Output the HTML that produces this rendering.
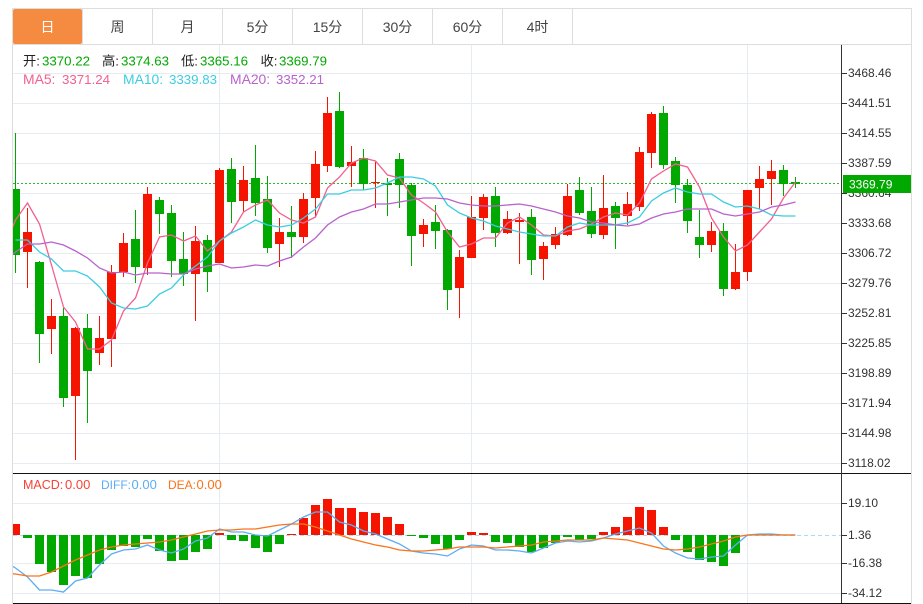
<!DOCTYPE html>
<html><head><meta charset="utf-8"><style>
html,body{margin:0;padding:0;background:#fff;width:923px;height:604px;overflow:hidden}
svg{display:block}
text{font-family:"Liberation Sans","Noto Sans CJK SC",sans-serif}
.a text{font-size:12px;fill:#333}
.t text{font-size:14px;fill:#444;text-anchor:middle}
.h text{font-size:13.3px}
</style></head><body>
<svg width="923" height="604" viewBox="0 0 923 604" xmlns="http://www.w3.org/2000/svg">
<defs><clipPath id="c"><rect x="13" y="45" width="828" height="558"/></clipPath></defs>
<path d="M13 73.5H841M13 103.5H841M13 133.5H841M13 163.5H841M13 193.5H841M13 223.5H841M13 253.5H841M13 283.5H841M13 313.5H841M13 343.5H841M13 373.5H841M13 403.5H841M13 433.5H841M13 463.5H841M13 503.5H841M13 563.5H841M13 593.5H841M219.5 45V603M471.5 45V603M747.5 45V603" stroke="#e6ecf1" fill="none"/>
<path d="M12.5 8V604M911.5 8V604M12 8.5H912M82.5 9V44M152.5 9V44M222.5 9V44M292.5 9V44M362.5 9V44M432.5 9V44M502.5 9V44M572.5 9V44M13 44.5H911" stroke="#ddd" fill="none"/>
<rect x="13" y="9" width="69" height="35" rx="2" fill="#f58b40"/>
<g class="t">
<text x="47.5" y="32" style="fill:#fff">日</text><text x="117.5" y="32">周</text><text x="187.5" y="32">月</text><text x="257.5" y="32">5分</text><text x="327.5" y="32">15分</text><text x="397.5" y="32">30分</text><text x="467.5" y="32">60分</text><text x="537.5" y="32">4时</text>
</g>
<path d="M13 183.5H841" stroke="#2fb52f" stroke-dasharray="2 2" fill="none"/>
<path d="M13 535.5H841" stroke="#a6e0f0" stroke-dasharray="4 3" fill="none"/>
<g clip-path="url(#c)">
<g fill="#f51400" stroke="none">
<path d="M23 232h9V252h-9zM47 316h9V329h-9zM71 328h9V396h-9zM95 338h9V353h-9zM107 272h9V339h-9zM119 243h9V272h-9zM143 194h9V268h-9zM191 241h9V274h-9zM215 170h9V263h-9zM239 180h9V201h-9zM275 232h9V244h-9zM299 199h9V237h-9zM311 164h9V198h-9zM323 113h9V166h-9zM347 162h9V166h-9zM371 182h9V183h-9zM419 225h9V234h-9zM455 257h9V288h-9zM467 217h9V258h-9zM479 197h9V218h-9zM503 219h9V233h-9zM515 220h9V222h-9zM539 246h9V259h-9zM551 234h9V245h-9zM563 196h9V235h-9zM599 208h9V235h-9zM623 204h9V216h-9zM635 152h9V207h-9zM647 114h9V153h-9zM707 231h9V245h-9zM731 272h9V289h-9zM743 190h9V272h-9zM755 179h9V188h-9zM767 171h9V179h-9z"/>
<path d="M11 524h9V535h-9zM299 518h9V535h-9zM311 505h9V535h-9zM323 499h9V535h-9zM335 508h9V535h-9zM347 508h9V535h-9zM359 512h9V535h-9zM371 513h9V535h-9zM383 517h9V535h-9zM395 524h9V535h-9zM467 532h9V535h-9zM479 533h9V535h-9zM599 532h9V535h-9zM611 527h9V535h-9zM623 517h9V535h-9zM635 507h9V535h-9zM647 510h9V535h-9zM659 527h9V535h-9zM215 533h9V535h-9zM287 534h9V535h-9zM755 534h9V535h-9zM767 534h9V535h-9z"/>
</g>
<path fill="none" stroke="#f51400" d="M27.5 208V288M51.5 299V354M75.5 327V460M99.5 316V365M111.5 265V367M123.5 233V277M147.5 187V275M195.5 226V321M219.5 168V263M243.5 166V212M279.5 218V267M303.5 193V243M315.5 151V217M327.5 97V172M351.5 146V187M375.5 162V208M423.5 219V247M459.5 250V318M471.5 196V258M483.5 194V230M507.5 211V234M519.5 213V264M543.5 242V280M555.5 227V249M567.5 184V236M603.5 175V239M627.5 192V225M639.5 147V211M651.5 112V168M711.5 222V252M735.5 244V290M747.5 190V281M759.5 166V209M771.5 160V205"/>
<g fill="#00a800" stroke="none">
<path d="M11 189h9V255h-9zM35 262h9V334h-9zM59 316h9V398h-9zM83 328h9V371h-9zM131 239h9V267h-9zM155 200h9V214h-9zM167 213h9V261h-9zM179 259h9V274h-9zM203 240h9V272h-9zM227 169h9V202h-9zM251 178h9V203h-9zM263 199h9V248h-9zM287 232h9V237h-9zM335 111h9V167h-9zM359 158h9V184h-9zM383 183h9V185h-9zM395 159h9V185h-9zM407 185h9V236h-9zM431 222h9V231h-9zM443 230h9V290h-9zM491 196h9V233h-9zM527 217h9V260h-9zM575 190h9V213h-9zM587 211h9V234h-9zM611 206h9V218h-9zM659 113h9V165h-9zM671 161h9V185h-9zM683 185h9V221h-9zM695 237h9V245h-9zM719 231h9V289h-9zM779 170h9V184h-9zM791 182h9V184h-9z"/>
<path d="M23 535h9V538h-9zM35 535h9V564h-9zM47 535h9V572h-9zM59 535h9V585h-9zM71 535h9V576h-9zM83 535h9V578h-9zM95 535h9V564h-9zM107 535h9V550h-9zM119 535h9V546h-9zM131 535h9V547h-9zM143 535h9V539h-9zM155 535h9V551h-9zM167 535h9V561h-9zM179 535h9V560h-9zM191 535h9V552h-9zM203 535h9V549h-9zM227 535h9V540h-9zM239 535h9V541h-9zM251 535h9V548h-9zM263 535h9V552h-9zM275 535h9V544h-9zM407 535h9V536h-9zM419 535h9V538h-9zM431 535h9V544h-9zM443 535h9V549h-9zM455 535h9V540h-9zM491 535h9V542h-9zM503 535h9V543h-9zM515 535h9V547h-9zM527 535h9V552h-9zM539 535h9V548h-9zM551 535h9V543h-9zM563 535h9V537h-9zM575 535h9V540h-9zM587 535h9V539h-9zM671 535h9V540h-9zM683 535h9V552h-9zM695 535h9V560h-9zM707 535h9V562h-9zM719 535h9V566h-9zM731 535h9V553h-9z"/>
</g>
<path fill="none" stroke="#00a800" d="M15.5 133V273M39.5 261V363M63.5 308V407M87.5 314V423M135.5 210V283M159.5 197V234M171.5 205V277M183.5 232V286M207.5 235V292M231.5 158V223M255.5 145V216M267.5 176V253M291.5 206V258M339.5 92V168M363.5 149V190M387.5 178V216M399.5 153V208M411.5 183V266M435.5 205V249M447.5 229V310M495.5 187V247M531.5 209V275M579.5 177V215M591.5 187V238M615.5 202V249M663.5 106V169M675.5 157V203M687.5 179V233M699.5 210V258M723.5 223V296M783.5 165V196M795.5 177V188"/>
<g fill="none" stroke-width="1.3">
<polyline stroke="#f2608f" points="3.5 250 15.5 220 27.5 203 39.5 224 51.5 265 63.5 307 75.5 322 87.5 349 99.5 349 111.5 340 123.5 311 135.5 298 147.5 263 159.5 237 171.5 235 183.5 241 195.5 236 207.5 251 219.5 241 231.5 232 243.5 212 255.5 205 267.5 200 279.5 213 291.5 220 303.5 223 315.5 217 327.5 188 339.5 177 351.5 163 363.5 158 375.5 161 387.5 175 399.5 178 411.5 195 423.5 203 435.5 212 447.5 232 459.5 247 471.5 244 483.5 238 495.5 238 507.5 223 519.5 217 531.5 225 543.5 235 555.5 236 567.5 231 579.5 229 591.5 224 603.5 217 615.5 213 627.5 215 639.5 203 651.5 179 663.5 171 675.5 164 687.5 167 699.5 187 711.5 218 723.5 237 735.5 251 747.5 245 759.5 232 771.5 219 783.5 198 795.5 182"/>
<polyline stroke="#3ccde0" points="15.5 240 27.5 240 39.5 252 51.5 259 63.5 271 75.5 271 87.5 276 99.5 287 111.5 303 123.5 308 135.5 309 147.5 306 159.5 294 171.5 288 183.5 275 195.5 266 207.5 257 219.5 241 231.5 233 243.5 227 255.5 220 267.5 225 279.5 227 291.5 225 303.5 218 315.5 209 327.5 194 339.5 194 351.5 190 363.5 190 375.5 188 387.5 183 399.5 177 411.5 177 423.5 179 435.5 186 447.5 205 459.5 213 471.5 218 483.5 221 495.5 226 507.5 229 519.5 232 531.5 234 543.5 236 555.5 236 567.5 227 579.5 223 591.5 225 603.5 225 615.5 225 627.5 223 639.5 217 651.5 201 663.5 193 675.5 188 687.5 192 699.5 194 711.5 194 723.5 202 735.5 207 747.5 206 759.5 209 771.5 215 783.5 216 795.5 216"/>
<polyline stroke="#b862cc" points="3.5 262 15.5 252 27.5 244 39.5 244 51.5 242 63.5 245 75.5 251 87.5 258 99.5 268 111.5 273 123.5 272 135.5 275 147.5 273 159.5 273 171.5 274 183.5 274 195.5 269 207.5 266 219.5 264 231.5 268 243.5 267 255.5 265 267.5 266 279.5 261 291.5 257 303.5 247 315.5 238 327.5 225 339.5 217 351.5 212 363.5 209 375.5 204 387.5 204 399.5 202 411.5 200 423.5 198 435.5 198 447.5 199 459.5 203 471.5 205 483.5 206 495.5 206 507.5 205 519.5 204 531.5 206 543.5 209 555.5 212 567.5 216 579.5 218 591.5 222 603.5 223 615.5 225 627.5 226 639.5 224 651.5 218 663.5 214 675.5 212 687.5 209 699.5 209 711.5 209 723.5 214 735.5 216 747.5 214 759.5 212 771.5 207 783.5 205 795.5 202"/>
<polyline stroke="#5dadf2" points="3.5 561 15.5 568 27.5 577 39.5 590 51.5 590 63.5 592 75.5 581 87.5 578 99.5 565 111.5 554 123.5 550 135.5 549 147.5 545 159.5 550 171.5 553 183.5 549 195.5 541 207.5 538 219.5 529 231.5 532 243.5 532 255.5 535 267.5 536 279.5 530 291.5 524 303.5 517 315.5 512 327.5 512 339.5 522 351.5 525 363.5 531 375.5 534 387.5 539 399.5 544 411.5 551 423.5 553 435.5 554 447.5 556 459.5 549 471.5 545 483.5 546 495.5 550 507.5 550 519.5 551 531.5 553 543.5 548 555.5 543 567.5 541 579.5 542 591.5 541 603.5 538 615.5 534 627.5 531 639.5 528 651.5 533 663.5 546 675.5 553 687.5 558 699.5 559 711.5 557 723.5 556 735.5 545 747.5 535 759.5 534 771.5 534 783.5 535 795.5 535"/>
<polyline stroke="#f9741a" points="3.5 573 15.5 574 27.5 576 39.5 576 51.5 572 63.5 566 75.5 560 87.5 555 99.5 550 111.5 547 123.5 545 135.5 544 147.5 543 159.5 542 171.5 540 183.5 537 195.5 534 207.5 531 219.5 530 231.5 530 243.5 529 255.5 529 267.5 527 279.5 525 291.5 524 303.5 524 315.5 527 327.5 531 339.5 535 351.5 539 363.5 542 375.5 545 387.5 547 399.5 550 411.5 551 423.5 551 435.5 550 447.5 549 459.5 547 471.5 547 483.5 547 495.5 548 507.5 547 519.5 546 531.5 545 543.5 542 555.5 541 567.5 540 579.5 540 591.5 540 603.5 538 615.5 539 627.5 540 639.5 543 651.5 546 663.5 549 675.5 550 687.5 549 699.5 547 711.5 544 723.5 541 735.5 537 747.5 535 759.5 535 771.5 535 783.5 535 795.5 535"/>
</g>
</g>
<path d="M13 473.5H911M13 603.5H911" stroke="#111" fill="none"/>
<path d="M841.5 45V603" stroke="#333" fill="none"/>
<path d="M842 73.5h5M842 103.5h5M842 133.5h5M842 163.5h5M842 193.5h5M842 223.5h5M842 253.5h5M842 283.5h5M842 313.5h5M842 343.5h5M842 373.5h5M842 403.5h5M842 433.5h5M842 463.5h5M842 503.5h5M842 535.5h5M842 563.5h5M842 593.5h5" stroke="#333" fill="none"/>
<g class="a">
<text x="848" y="77">3468.46</text><text x="848" y="107">3441.51</text><text x="848" y="137">3414.55</text><text x="848" y="167">3387.59</text><text x="848" y="197">3360.64</text><text x="848" y="227">3333.68</text><text x="848" y="257">3306.72</text><text x="848" y="287">3279.76</text><text x="848" y="317">3252.81</text><text x="848" y="347">3225.85</text><text x="848" y="377">3198.89</text><text x="848" y="407">3171.94</text><text x="848" y="437">3144.98</text><text x="848" y="467">3118.02</text>
<text x="848" y="507">19.10</text><text x="848" y="539">1.36</text><text x="848" y="567">-16.38</text><text x="848" y="597">-34.12</text>
</g>
<rect x="843" y="175" width="68" height="18" fill="#00a800"/>
<text x="849" y="188.5" font-size="12" fill="#fff">3369.79</text>
<g class="h">
<text x="23" y="65.5" fill="#222">开:</text><text x="42" y="65.5" fill="#00a800">3370.22</text>
<text x="102" y="65.5" fill="#222">高:</text><text x="121" y="65.5" fill="#00a800">3374.63</text>
<text x="181" y="65.5" fill="#222">低:</text><text x="200" y="65.5" fill="#00a800">3365.16</text>
<text x="260.5" y="65.5" fill="#222">收:</text><text x="279" y="65.5" fill="#00a800">3369.79</text>
<text x="23" y="84" fill="#f2608f" style="font-size:13.9px">MA5:</text><text x="62" y="84" fill="#f2608f">3371.24</text>
<text x="123" y="84" fill="#3ccde0" style="font-size:13.9px">MA10:</text><text x="169" y="84" fill="#3ccde0">3339.83</text>
<text x="230" y="84" fill="#b862cc" style="font-size:13.9px">MA20:</text><text x="276" y="84" fill="#b862cc">3352.21</text>
<text x="23" y="489" fill="#f44336" style="font-size:12.5px">MACD:</text><text x="65" y="489" fill="#f44336" style="font-size:13px">0.00</text>
<text x="101" y="489" fill="#5dadf2" style="font-size:12px">DIFF:</text><text x="131.5" y="489" fill="#5dadf2" style="font-size:13px">0.00</text>
<text x="168" y="489" fill="#f9741a" style="font-size:12px">DEA:</text><text x="196.5" y="489" fill="#f9741a" style="font-size:13px">0.00</text>
</g>
</svg>
</body></html>
